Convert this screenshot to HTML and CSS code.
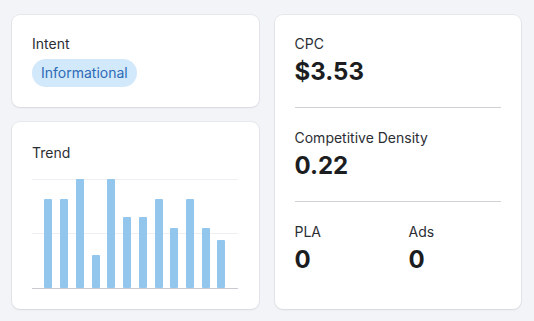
FILE: index.html
```html
<!DOCTYPE html>
<html lang="en">
<head>
    <meta charset="UTF-8">
    <meta name="viewport" content="width=device-width, initial-scale=1.0">
    <title>Keyword Overview</title>
    <link rel="stylesheet" href="styles.css">
</head>
<body>
    <div class="overview">
        <div class="card intent-card">
            <p class="label">Intent</p>
            <span class="badge">Informational</span>
        </div>
        <div class="card metrics-card">
            <div class="metric">
                <p class="label">CPC</p>
                <p class="value">$3.53</p>
            </div>
            <div class="metric">
                <p class="label">Competitive Density</p>
                <p class="value">0.22</p>
            </div>
            <div class="metric metric-pair">
                <div>
                    <p class="label">PLA</p>
                    <p class="value">0</p>
                </div>
                <div>
                    <p class="label">Ads</p>
                    <p class="value">0</p>
                </div>
            </div>
        </div>
        <div class="card trend-card">
            <p class="label trend-label">Trend</p>
            <svg class="trend-chart" width="206" height="110" viewBox="0 0 206 110">
                <line x1="0" y1="0.5" x2="206" y2="0.5" stroke="#eeeff2" />
                <line x1="0" y1="54.5" x2="206" y2="54.5" stroke="#eeeff2" />
                <g fill="#93c6ec">
                    <rect x="12" y="20" width="8" height="89" rx="1" />
                    <rect x="28" y="20" width="8" height="89" rx="1" />
                    <rect x="44" y="0" width="8" height="109" rx="1" />
                    <rect x="60" y="76" width="8" height="33" rx="1" />
                    <rect x="75" y="0" width="8" height="109" rx="1" />
                    <rect x="91" y="38" width="8" height="71" rx="1" />
                    <rect x="107" y="38" width="8" height="71" rx="1" />
                    <rect x="123" y="20" width="8" height="89" rx="1" />
                    <rect x="138" y="49" width="8" height="60" rx="1" />
                    <rect x="154" y="20" width="8" height="89" rx="1" />
                    <rect x="170" y="49" width="8" height="60" rx="1" />
                    <rect x="185" y="61" width="8" height="48" rx="1" />
                </g>
                <line x1="0" y1="109.5" x2="206" y2="109.5" stroke="#c9cbd0" />
            </svg>
        </div>
    </div>
</body>
</html>
```

FILE: styles.css
```css
body {
    font-family: Inter, 'Noto Sans', Arial, sans-serif;
    margin: 0;
    padding: 0;
    background: #f3f4f7;
    color: #222;
}
p {
    margin: 0;
}
.overview {
    display: grid;
    grid-template-columns: 1fr 1fr;
    grid-template-rows: auto 1fr;
    column-gap: 16px;
    row-gap: 15px;
    padding: 15px 13px 12px 12px;
}
.card {
    background: #fff;
    border-radius: 8px;
    box-shadow: 0 0 0 1px rgba(20,30,50,0.05), 0 1px 2px rgba(20,30,50,0.08);
    padding: 20px;
}
.label {
    font-size: 14px;
    line-height: 18px;
    color: #2b2e34;
}
.intent-card {
    display: flex;
    flex-direction: column;
    align-items: flex-start;
    gap: 6px;
}
.badge {
    display: inline-block;
    height: 28px;
    line-height: 28px;
    padding: 0 9px;
    border-radius: 14px;
    background: #d2e8fb;
    color: #2d6bb5;
    font-size: 14px;
}
.trend-card {
    padding: 22px 20px 20px;
}
.trend-label {
    margin-bottom: 17px;
}
.trend-chart {
    display: block;
}
.metrics-card {
    grid-column: 2;
    grid-row: 1 / span 2;
    padding: 0 20px;
}
.metric {
    padding: 20px 0 20px;
    border-bottom: 1px solid #cfd1d5;
}
.metric + .metric {
    padding-top: 21px;
}
.metric:last-child {
    border-bottom: none;
}
.metric .label {
    margin-bottom: 4px;
}
.value {
    font-size: 24px;
    line-height: 30px;
    font-weight: 700;
    color: #1b1d21;
}
.metric-pair {
    display: grid;
    grid-template-columns: 114px 1fr;
}
```
